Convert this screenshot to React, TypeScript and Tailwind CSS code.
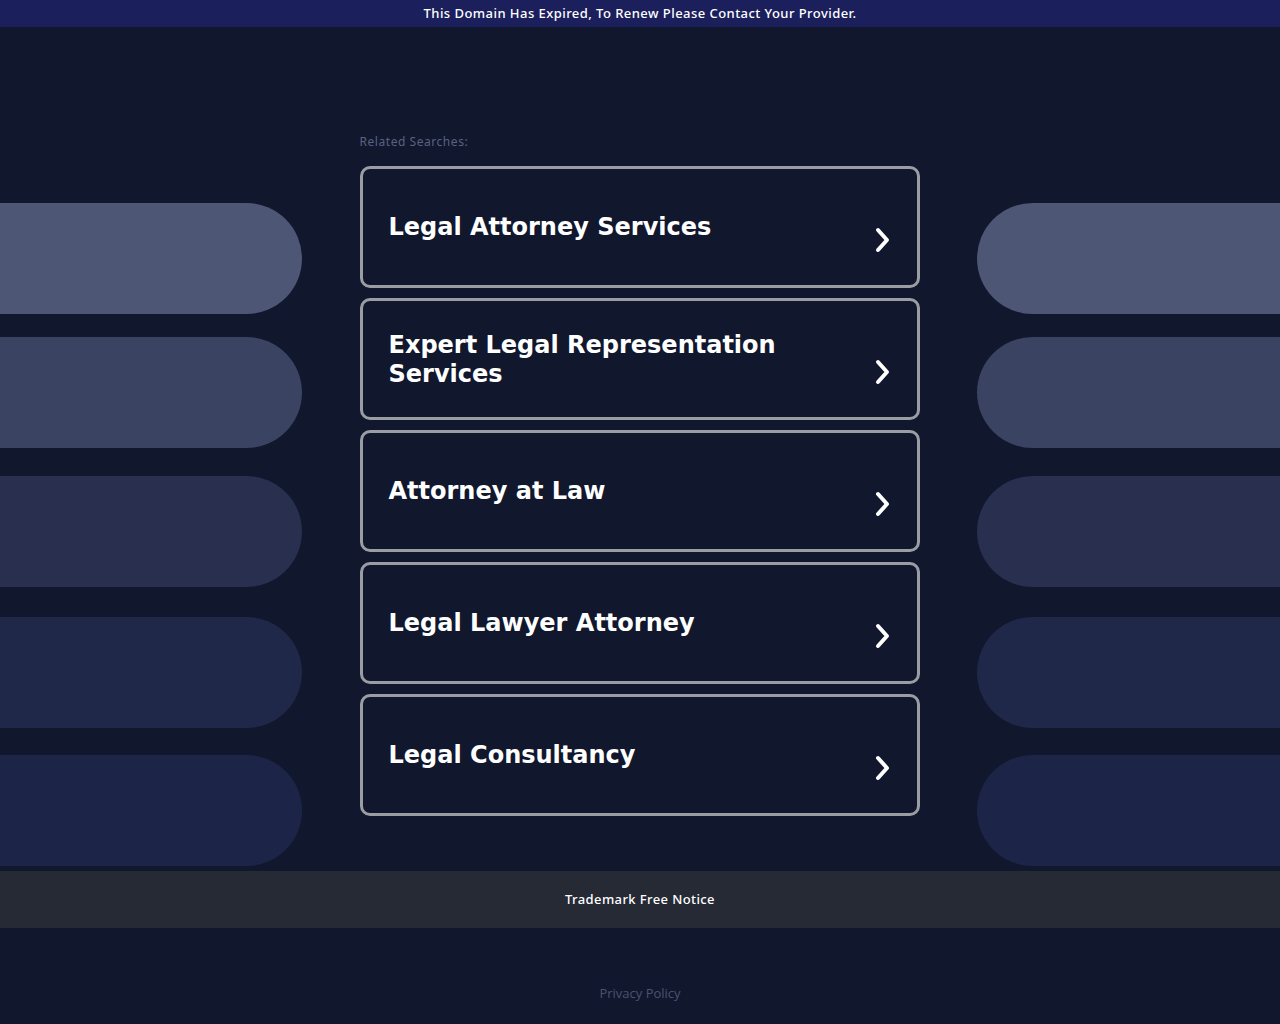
import { ReactNode } from "react";

const searches = [
  "Legal Attorney Services",
  "Expert Legal Representation Services",
  "Attorney at Law",
  "Legal Lawyer Attorney",
  "Legal Consultancy",
];

const pills = [
  { color: "bg-[#4d5775]", mt: "mt-[176px]" },
  { color: "bg-[#3a4361]", mt: "mt-[23px]" },
  { color: "bg-[#282f4f]", mt: "mt-[28px]" },
  { color: "bg-[#1f2849]", mt: "mt-[30px]" },
  { color: "bg-[#1c2548]", mt: "mt-[27px]" },
];

function Chevron() {
  return (
    <svg width="18" height="28" viewBox="0 0 18 28" className="mt-[26px] shrink-0">
      <path
        d="M4 4 L13 14 L4 24"
        fill="none"
        stroke="#ffffff"
        strokeWidth="4"
        strokeLinecap="round"
        strokeLinejoin="round"
      />
    </svg>
  );
}

function SideColumn({ side }: { side: "left" | "right" }) {
  return (
    <div className="flex flex-col">
      {pills.map((p, i) => (
        <div
          key={i}
          className={`${p.mt} h-[111px] ${p.color} ${
            side === "left" ? "w-[302px] rounded-r-[56px]" : "w-[303px] rounded-l-[56px]"
          }`}
        />
      ))}
    </div>
  );
}

function SearchCard({ children }: { children: ReactNode }) {
  return (
    <a
      href="#"
      className="flex h-[122px] items-center justify-between rounded-[10px] border-[3px] border-[#9a9da4] bg-[#11172d] pl-[26px] pr-[25px]"
    >
      <span className="mt-[1px] text-[24px] font-bold leading-[29px] text-white [font-family:'DejaVu_Sans',sans-serif]">
        {children}
      </span>
      <Chevron />
    </a>
  );
}

export default function App() {
  return (
    <div className="min-h-[1024px] bg-[#11172d] [font-family:'Noto_Sans',sans-serif]">
      <div className="flex h-[27px] items-center justify-center bg-[#1b1f5c] text-[13px] font-medium tracking-[0.45px] text-white">
        This Domain Has Expired, To Renew Please Contact Your Provider.
      </div>

      <div className="flex justify-between">
        <SideColumn side="left" />

        <div className="flex w-[560px] flex-col pb-[55px] pt-[107px]">
          <div className="text-[12px] leading-[16px] tracking-[0.55px] text-[#5a6282]">Related Searches:</div>
          <div className="mt-[16px] flex flex-col gap-[10px]">
            {searches.map((s) => (
              <SearchCard key={s}>{s}</SearchCard>
            ))}
          </div>
        </div>

        <SideColumn side="right" />
      </div>

      <div className="flex h-[57px] items-center justify-center bg-[#252a35] text-[13px] font-medium tracking-[0.4px] text-white">
        Trademark Free Notice
      </div>

      <div className="flex h-[130px] items-center justify-center pt-[2px] text-[13px] text-[#4b5270] [font-family:'Open_Sans',sans-serif]">
        Privacy Policy
      </div>
    </div>
  );
}
